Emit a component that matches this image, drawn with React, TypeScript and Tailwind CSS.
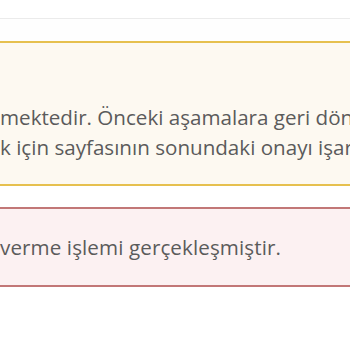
export default function App() {
  return (
    <main className="h-[350px] w-[350px] overflow-hidden bg-white font-['Open_Sans',sans-serif] text-[20.6px] text-[#5b5b5b]">
      <div className="h-[18px]" />
      <div className="h-[23px] border-t border-[#ebebeb] bg-[#fefefe]" />
      <section className="h-[145px] border-y-2 border-[#e6c04f] bg-[#fdf9f1] pt-[59px]">
        <p className="whitespace-nowrap leading-[30px]">
          mektedir. Önceki aşamalara geri dönmek
          <br />
          k için sayfasının sonundaki onayı işaretleyiniz.
        </p>
      </section>
      <div className="h-[21px]" />
      <section className="h-[80px] border-y-2 border-[#c27777] bg-[#fcf1f2] pt-[23px]">
        <p className="whitespace-nowrap leading-[30px] tracking-[0.1px]">verme işlemi gerçekleşmiştir.</p>
      </section>
    </main>
  );
}
